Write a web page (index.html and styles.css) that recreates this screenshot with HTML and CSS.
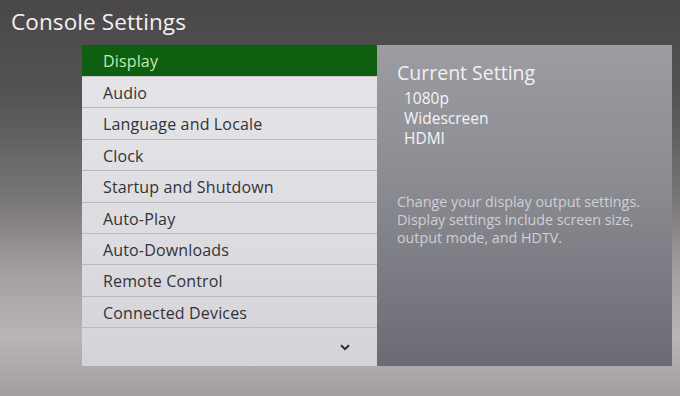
FILE: index.html
```html
<!DOCTYPE html>
<html>
<head>
<meta charset="utf-8">
<link rel="stylesheet" href="styles.css">
</head>
<body>
<div class="screen">
  <h1 class="title">Console Settings</h1>
  <div class="panel">
    <div class="menu">
      <div class="item active">Display</div>
      <div class="item">Audio</div>
      <div class="item">Language and Locale</div>
      <div class="item">Clock</div>
      <div class="item">Startup and Shutdown</div>
      <div class="item">Auto-Play</div>
      <div class="item">Auto-Downloads</div>
      <div class="item">Remote Control</div>
      <div class="item">Connected Devices</div>
      <div class="more">
        <svg class="chev" width="10" height="7" viewBox="0 0 10 7"><path d="M1 1.2 L5 5.2 L9 1.2" fill="none" stroke="#2c2c30" stroke-width="2"/></svg>
      </div>
    </div>
    <div class="info">
      <div class="info-title">Current Setting</div>
      <div class="values">
        <div>1080p</div>
        <div>Widescreen</div>
        <div>HDMI</div>
      </div>
      <p class="desc">Change your display output settings. Display settings include screen size, output mode, and HDTV.</p>
    </div>
  </div>
</div>
</body>
</html>
```

FILE: styles.css
```css
html, body {
  margin: 0;
  padding: 0;
}
body {
  width: 680px;
  height: 396px;
  overflow: hidden;
  font-family: "Open Sans", "Noto Sans", sans-serif;
}
.screen {
  width: 680px;
  height: 396px;
  background: linear-gradient(180deg, #4a4748 0%, #565355 25%, #79767a 50%, #a4a0a3 70%, #b8b4b7 85%, #a29ea1 100%);
  display: flex;
  flex-direction: column;
}
.title {
  margin: 0;
  padding: 8px 0 0 11px;
  height: 38px;
  box-sizing: border-box;
  font-size: 22.5px;
  font-weight: 400;
  color: #f2f2f2;
  line-height: 28px;
  letter-spacing: 0.1px;
}
.panel {
  margin: 7px 0 0 82px;
  width: 590px;
  height: 321px;
  display: flex;
}
.menu {
  width: 295px;
  display: flex;
  flex-direction: column;
  background: linear-gradient(180deg, #e6e6ea 0%, #dcdce1 60%, #d3d3d9 100%);
}
.item {
  height: 31.4px;
  box-sizing: border-box;
  border-bottom: 1px solid #b9b9c0;
  padding: 2px 0 0 21px;
  font-size: 16px;
  line-height: 28px;
  color: #333336;
  letter-spacing: 0.15px;
}
.item.active {
  height: 32px;
  background: #0f5f10;
  color: #c0eab4;
  border-bottom-color: #c8c8cc;
}
.more {
  flex: 1;
  display: flex;
  justify-content: flex-end;
  align-items: center;
  padding-right: 27px;
}
.chev {
  display: block;
}
.info {
  flex: 1;
  background: linear-gradient(180deg, #9c9ca2 0%, #8a8a91 45%, #6b6c73 100%);
  padding: 15px 0 0 20px;
  box-sizing: border-box;
}
.info-title {
  font-size: 19.5px;
  line-height: 26px;
  color: #f0f0f2;
}
.values {
  padding: 2px 0 0 7px;
  font-size: 15.5px;
  line-height: 20px;
  color: #f4f4f6;
}
.desc {
  margin: 45px 0 0 0;
  font-size: 14.3px;
  line-height: 18px;
  color: #cfcfd4;
  width: 265px;
}
```
